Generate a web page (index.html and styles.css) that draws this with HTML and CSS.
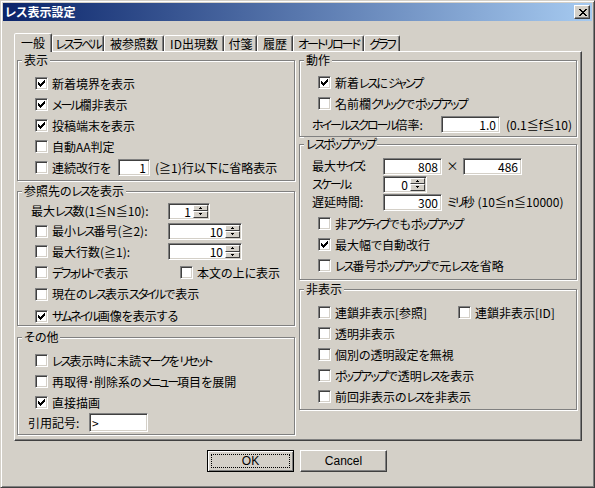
FILE: index.html
```html
<!DOCTYPE html>
<html lang="ja">
<head>
<meta charset="utf-8">
<title>レス表示設定</title>
<link rel="stylesheet" href="styles.css">
</head>
<body>
<div class="window">
  <div class="titlebar">
    <span class="title">レス表示設定</span>
    <span class="close"><svg width="8" height="7" viewBox="0 0 8 7"><path d="M0 0h2v1H0zM6 0h2v1H6zM1 1h2v1H1zM5 1h2v1H5zM2 2h4v1H2zM3 3h2v1H3zM2 4h4v1H2zM1 5h2v1H1zM5 5h2v1H5zM0 6h2v1H0zM6 6h2v1H6z"/></svg></span>
  </div>
  <div class="main">
    <div class="tabs">
      <span class="tab sel">一般</span>
      <span class="tab t52"><span class="k">レスラベル</span></span>
      <span class="tab t60">被参照数</span>
      <span class="tab t60">ID出現数</span>
      <span class="tab t33">付箋</span>
      <span class="tab t36">履歴</span>
      <span class="tab t71"><span class="k">オートリロード</span></span>
      <span class="tab t36"><span class="k">グラフ</span></span>
    </div>
    <div class="panel">
      <div class="col left">
        <div class="group g-disp">
          <div class="legend">表示</div>
          <div class="rows">
            <div class="row"><span class="cb"><svg width="11" height="11" viewBox="0 0 11 11"><path d="M2 4h1v3H2zM3 5h1v3H3zM4 6h1v3H4zM5 5h1v3H5zM6 4h1v3H6zM7 3h1v3H7zM8 2h1v3H8z"/></svg></span><span>新着境界を表示</span></div>
            <div class="row"><span class="cb"><svg width="11" height="11" viewBox="0 0 11 11"><path d="M2 4h1v3H2zM3 5h1v3H3zM4 6h1v3H4zM5 5h1v3H5zM6 4h1v3H6zM7 3h1v3H7zM8 2h1v3H8z"/></svg></span><span><span class="k">メール</span>欄非表示</span></div>
            <div class="row"><span class="cb"><svg width="11" height="11" viewBox="0 0 11 11"><path d="M2 4h1v3H2zM3 5h1v3H3zM4 6h1v3H4zM5 5h1v3H5zM6 4h1v3H6zM7 3h1v3H7zM8 2h1v3H8z"/></svg></span><span>投稿端末を表示</span></div>
            <div class="row"><span class="cb"></span><span>自動AA判定</span></div>
            <div class="row"><span class="cb"></span><span class="lw66">連続改行を</span><span class="edit w32"><span class="v">1</span></span><span class="after5">(≧1)行以下に省略表示</span></div>
          </div>
        </div>
        <div class="group g-ref">
          <div class="legend">参照先の<span class="k">レス</span>を表示</div>
          <div class="rows rows-ref">
            <div class="row h20"><span class="lw137 out4">最大<span class="k">レス</span>数(1≦N≦10):</span><span class="edit w42"><span class="v">1</span><span class="sb"><span class="sbb"><svg width="3" height="2" viewBox="0 0 3 2"><path d="M1 0h1v1H1zM0 1h3v1H0z"/></svg></span><span class="sbb"><svg width="3" height="2" viewBox="0 0 3 2"><path d="M0 0h3v1H0zM1 1h1v1H1z"/></svg></span></span></span></div>
            <div class="row h20"><span class="cb"></span><span class="lw116">最小<span class="k">レス</span>番号(≧2):</span><span class="edit w74"><span class="v">10</span><span class="sb"><span class="sbb"><svg width="3" height="2" viewBox="0 0 3 2"><path d="M1 0h1v1H1zM0 1h3v1H0z"/></svg></span><span class="sbb"><svg width="3" height="2" viewBox="0 0 3 2"><path d="M0 0h3v1H0zM1 1h1v1H1z"/></svg></span></span></span></div>
            <div class="row h21"><span class="cb"></span><span class="lw116">最大行数(≧1):</span><span class="edit w74"><span class="v">10</span><span class="sb"><span class="sbb"><svg width="3" height="2" viewBox="0 0 3 2"><path d="M1 0h1v1H1zM0 1h3v1H0z"/></svg></span><span class="sbb"><svg width="3" height="2" viewBox="0 0 3 2"><path d="M0 0h3v1H0zM1 1h1v1H1z"/></svg></span></span></span></div>
            <div class="row h21"><span class="cb"></span><span class="lw128"><span class="k">デフォルト</span>で表示</span><span class="cb"></span><span>本文の上に表示</span></div>
            <div class="row h22"><span class="cb"></span><span>現在の<span class="k">レス</span>表示<span class="k">スタイル</span>で表示</span></div>
            <div class="row h22"><span class="cb"><svg width="11" height="11" viewBox="0 0 11 11"><path d="M2 4h1v3H2zM3 5h1v3H3zM4 6h1v3H4zM5 5h1v3H5zM6 4h1v3H6zM7 3h1v3H7zM8 2h1v3H8z"/></svg></span><span><span class="k">サムネイル</span>画像を表示する</span></div>
          </div>
        </div>
        <div class="group g-etc">
          <div class="legend">その他</div>
          <div class="rows">
            <div class="row"><span class="cb"></span><span><span class="k">レス</span>表示時に未読<span class="k">マーク</span>を<span class="k">リセット</span></span></div>
            <div class="row"><span class="cb"></span><span>再取得･削除系の<span class="k">メニュー</span>項目を展開</span></div>
            <div class="row"><span class="cb"><svg width="11" height="11" viewBox="0 0 11 11"><path d="M2 4h1v3H2zM3 5h1v3H3zM4 6h1v3H4zM5 5h1v3H5zM6 4h1v3H6zM7 3h1v3H7zM8 2h1v3H8z"/></svg></span><span>直接描画</span></div>
            <div class="row h19"><span class="lw61 out7">引用記号:</span><span class="edit w59 tall left-v"><span class="v">&gt;</span></span></div>
          </div>
        </div>
      </div>
      <div class="col right">
        <div class="group g-act">
          <div class="legend">動作</div>
          <div class="rows">
            <div class="row"><span class="cb"><svg width="11" height="11" viewBox="0 0 11 11"><path d="M2 4h1v3H2zM3 5h1v3H3zM4 6h1v3H4zM5 5h1v3H5zM6 4h1v3H6zM7 3h1v3H7zM8 2h1v3H8z"/></svg></span><span>新着<span class="k">レス</span>に<span class="k">ジャンプ</span></span></div>
            <div class="row"><span class="cb"></span><span>名前欄<span class="k">クリック</span>で<span class="k">ポップアップ</span></span></div>
            <div class="row"><span class="lw129 out6"><span class="k">ホイールスクロール</span>倍率:</span><span class="edit w59"><span class="v">1.0</span></span><span class="after6">(0.1≦f≦10)</span></div>
          </div>
        </div>
        <div class="group g-pop">
          <div class="legend"><span class="k">レスポップアップ</span></div>
          <div class="rows">
            <div class="row h18"><span class="lw71 out6">最大<span class="k">サイズ</span>:</span><span class="edit w59"><span class="v">808</span></span><span class="times">×</span><span class="edit w59"><span class="v">486</span></span></div>
            <div class="row h18"><span class="lw71 out6"><span class="k">スケール</span>:</span><span class="edit w44"><span class="v">0</span><span class="sb"><span class="sbb"><svg width="3" height="2" viewBox="0 0 3 2"><path d="M1 0h1v1H1zM0 1h3v1H0z"/></svg></span><span class="sbb"><svg width="3" height="2" viewBox="0 0 3 2"><path d="M0 0h3v1H0zM1 1h1v1H1z"/></svg></span></span></span></div>
            <div class="row h18"><span class="lw71 out6">遅延時間:</span><span class="edit w59"><span class="v">300</span></span><span class="after5"><span class="k">ミリ</span>秒 (10≦n≦10000)</span></div>
            <div class="row gap2"><span class="cb"></span><span>非<span class="k">アクティブ</span>でも<span class="k">ポップアップ</span></span></div>
            <div class="row"><span class="cb"><svg width="11" height="11" viewBox="0 0 11 11"><path d="M2 4h1v3H2zM3 5h1v3H3zM4 6h1v3H4zM5 5h1v3H5zM6 4h1v3H6zM7 3h1v3H7zM8 2h1v3H8z"/></svg></span><span>最大幅で自動改行</span></div>
            <div class="row"><span class="cb"></span><span><span class="k">レス</span>番号<span class="k">ポップアップ</span>で元<span class="k">レス</span>を省略</span></div>
          </div>
        </div>
        <div class="group g-hide">
          <div class="legend">非表示</div>
          <div class="rows">
            <div class="row"><span class="cb"></span><span class="lw123">連鎖非表示[参照]</span><span class="cb"></span><span>連鎖非表示[ID]</span></div>
            <div class="row"><span class="cb"></span><span>透明非表示</span></div>
            <div class="row"><span class="cb"></span><span>個別の透明設定を無視</span></div>
            <div class="row"><span class="cb"></span><span><span class="k">ポップアップ</span>で透明<span class="k">レス</span>を表示</span></div>
            <div class="row"><span class="cb"></span><span>前回非表示の<span class="k">レス</span>を非表示</span></div>
          </div>
        </div>
      </div>
    </div>
    <div class="buttons">
      <span class="btn default"><span class="focus">OK</span></span>
      <span class="btn">Cancel</span>
    </div>
  </div>
</div>
</body>
</html>
```

FILE: styles.css
```css
html, body {
  margin: 0;
  padding: 0;
  background: #d4d0c8;
}
body {
  font-family: "Noto Sans CJK JP", "Noto Sans", "Liberation Sans", sans-serif;
  font-size: 12px;
  line-height: 14px;
  color: #000;
  font-feature-settings: "palt";
}
.k {
  letter-spacing: -2px;
}
.window {
  width: 595px;
  height: 488px;
  box-sizing: border-box;
  border: 1px solid;
  border-color: #d4d0c8 #404040 #404040 #d4d0c8;
  box-shadow: inset 1px 1px #fff, inset -1px -1px #808080;
  padding: 2px;
  display: flex;
  flex-direction: column;
}
.titlebar {
  height: 18px;
  flex: none;
  background: linear-gradient(90deg, #0a246a, #a6caf0);
  color: #fff;
  display: flex;
  align-items: center;
  justify-content: space-between;
  padding: 0 2px;
  font-weight: bold;
}
.close {
  width: 16px;
  height: 14px;
  box-sizing: border-box;
  background: #d4d0c8;
  border: 1px solid;
  border-color: #fff #404040 #404040 #fff;
  box-shadow: inset -1px -1px #808080;
  display: flex;
  align-items: center;
  justify-content: center;
  padding-left: 1px;
}
.close svg { display: block; }
.main {
  padding: 12px 10px 0 11px;
}
.tabs {
  display: flex;
  align-items: flex-end;
  margin-left: 2px;
  position: relative;
  z-index: 1;
}
.tab {
  height: 16px;
  box-sizing: border-box;
  border: 1px solid;
  border-bottom: none;
  border-color: #fff #404040 transparent #fff;
  border-radius: 2px 2px 0 0;
  box-shadow: inset -1px 0 #808080;
  text-align: center;
  padding-top: 1px;
  white-space: nowrap;
  background: #d4d0c8;
  overflow: hidden;
  line-height: 13px;
}
.tab.sel {
  width: 38px;
  height: 19px;
  margin-left: -2px;
  margin-bottom: -1px;
  padding-top: 2px;
}
.t33 { width: 33px; }
.t36 { width: 36px; }
.t52 { width: 52px; }
.t60 { width: 60px; }
.t71 { width: 71px; }
.panel {
  height: 390px;
  box-sizing: border-box;
  border: 1px solid;
  border-color: #fff #404040 #404040 #fff;
  box-shadow: inset -1px -1px #808080;
  display: flex;
  gap: 4px;
  padding-left: 2px;
}
.col {
  width: 278px;
  display: flex;
  flex-direction: column;
}
.group {
  box-sizing: border-box;
  border: 1px solid #808080;
  box-shadow: inset 1px 1px #fff, 1px 1px #fff;
  padding-left: 17px;
  display: flex;
  flex-direction: column;
}
.right .group { padding-left: 18px; }
.legend {
  align-self: flex-start;
  height: 14px;
  margin: -8px 0 0 -13px;
  padding: 0 2px;
  background: #d4d0c8;
  white-space: nowrap;
}
.right .legend { margin-left: -14px; }
.g-disp { height: 121px; margin-top: 8px; }
.g-ref  { height: 135px; margin-top: 10px; }
.g-etc  { height: 98px;  margin-top: 11px; }
.g-act  { height: 77px;  margin-top: 8px; }
.g-pop  { height: 136px; margin-top: 7px; }
.g-hide { height: 121px; margin-top: 9px; }
.g-act .rows { margin-top: 5px; }
.rows {
  margin-top: 6px;
  display: flex;
  flex-direction: column;
}
.rows-ref { margin-top: 3px; }
.row {
  height: 21px;
  display: flex;
  align-items: center;
  white-space: nowrap;
}
.row.h18 { height: 18px; }
.row.h19 { height: 19px; }
.row.h20 { height: 20px; }
.row.h21 { height: 21px; }
.row.h22 { height: 22px; }
.row.gap2 { margin-top: 2px; }
.cb {
  width: 13px;
  height: 13px;
  flex: none;
  box-sizing: border-box;
  background: #fff;
  border: 1px solid;
  border-color: #808080 #fff #fff #808080;
  box-shadow: inset 1px 1px #404040, inset -1px -1px #d4d0c8;
  margin-right: 4px;
}
.cb svg { display: block; }
.out4 { margin-left: -4px; }
.out6 { margin-left: -6px; }
.out7 { margin-left: -7px; }
.lw61 { width: 61px; flex: none; }
.lw66 { width: 66px; flex: none; }
.lw71 { width: 71px; flex: none; }
.lw116 { width: 116px; flex: none; }
.lw123 { width: 123px; flex: none; }
.lw128 { width: 128px; flex: none; }
.lw129 { width: 129px; flex: none; }
.lw137 { width: 137px; flex: none; }
.edit {
  height: 17px;
  box-sizing: border-box;
  flex: none;
  background: #fff;
  border: 1px solid;
  border-color: #808080 #fff #fff #808080;
  box-shadow: inset 1px 1px #404040, inset -1px -1px #d4d0c8;
  display: flex;
  align-items: center;
  justify-content: flex-end;
  padding: 0 1px 0 2px;
}
.edit.tall { height: 19px; }
.edit.left-v { justify-content: flex-start; }
.edit .v { padding-right: 2px; line-height: 13px; }
.w32 { width: 32px; }
.w42 { width: 42px; }
.w44 { width: 44px; }
.w59 { width: 59px; }
.w74 { width: 74px; }
.sb {
  width: 15px;
  height: 13px;
  display: flex;
  flex-direction: column;
  align-self: center;
}
.sbb {
  flex: 1;
  box-sizing: border-box;
  background: #d4d0c8;
  border: 1px solid;
  border-color: #fff #404040 #404040 #fff;
  display: flex;
  align-items: center;
  justify-content: center;
}
.sbb svg { display: block; }
.after5 { margin-left: 5px; }
.after6 { margin-left: 6px; }
.times {
  width: 21px;
  text-align: center;
  flex: none;
}
.buttons {
  display: flex;
  gap: 6px;
  margin-top: 9px;
  padding-left: 193px;
}
.btn {
  width: 87px;
  height: 22px;
  box-sizing: border-box;
  border: 1px solid;
  border-color: #fff #404040 #404040 #fff;
  box-shadow: inset -1px -1px #808080;
  display: flex;
  align-items: center;
  justify-content: center;
  font-family: "Liberation Sans", "Noto Sans CJK JP", sans-serif;
}
.btn.default {
  border-color: #000;
  box-shadow: inset 1px 1px #fff, inset -1px -1px #808080;
  padding: 3px;
}
.focus {
  flex: 1;
  align-self: stretch;
  border: 1px dotted #000;
  display: flex;
  align-items: center;
  justify-content: center;
}
```
